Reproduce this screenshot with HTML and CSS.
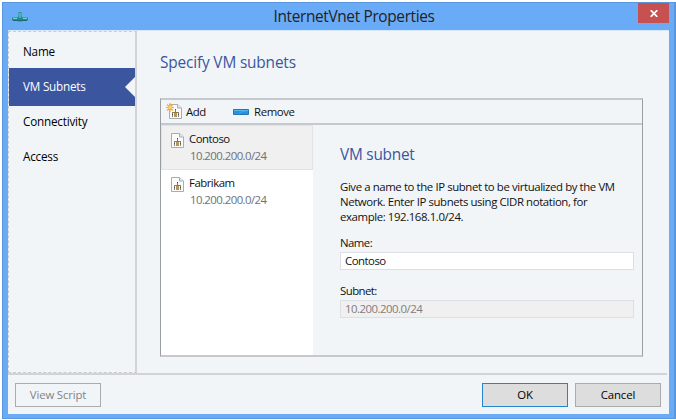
FILE: index.html
```html
<!DOCTYPE html>
<html lang="en">
<head>
<meta charset="utf-8">
<title>InternetVnet Properties</title>
<link rel="stylesheet" href="styles.css">
</head>
<body>
<svg width="0" height="0" class="defs" aria-hidden="true">
  <symbol id="subnet" viewBox="0 0 13 15">
    <path d="M.5.5h8l4 3.500v10.500h-12z" fill="#fbfbfb" stroke="#a9adb1"/>
    <path d="M8.500.5v3.500h4" fill="#e6e8ea" stroke="#a9adb1"/>
    <path d="M6.500 5v3M3 8.500h7M3.500 8v5M9.500 8v5" stroke="#85827c" fill="none"/>
    <path d="M6.500 7v6M5.500 8v5M7.500 8v5" stroke="#9c7425" stroke-opacity=".75" fill="none"/>
    <path d="M3 10.500h1M9 10.500h1M6 5.500h1" stroke="#604b31" fill="none"/>
  </symbol>
</svg>
<main class="window">
  <header class="titlebar">
    <svg class="app-icon" width="16" height="11" viewBox="0 0 16 11">
      <path d="M6.500 0h3v6h-3z" fill="#2b8f92"/>
      <path d="M0 5.500h5.500l1-1h3l1 1H16v3h-5l-1 1H6l-1-1H0z" fill="#268793"/>
      <path d="M1 6.500h4M11 6.500h4M8 1v5" stroke="#67dac5" fill="none"/>
      <path d="M1 8.500h14" stroke="#1d6a75"/>
    </svg>
    <h1>InternetVnet Properties</h1>
    <button class="close" aria-label="Close"><svg width="8" height="7" viewBox="0 0 8 7"><path d="M.7.2l6.600 6.600M7.300.2L.7 6.800" stroke="#fff" stroke-width="1.800"/></svg></button>
  </header>
  <div class="client">
    <div class="body">
      <nav class="sidebar">
        <a>Name</a>
        <a class="active"><span>VM Subnets</span></a>
        <a>Connectivity</a>
        <a>Access</a>
      </nav>
      <section class="content">
        <h2>Specify VM subnets</h2>
        <div class="panel">
          <div class="toolbar">
            <span class="add"><svg width="16" height="16" viewBox="0 0 16 16"><use href="#subnet" x="3" y="1" width="13" height="15"/><path d="M4 0v9M0 4.500h8M1 1.500l6 6M7 1.500l-6 6" stroke="#f2ab3b" stroke-width="1.200"/><circle cx="4" cy="4.500" r="1.600" fill="#ffd36b"/></svg>Add</span>
            <span class="remove"><svg width="16" height="6" viewBox="0 0 16 6"><path d="M.5.5h15v5H.5z" fill="#2a91df" stroke="#2277b5"/><path d="M1 1.500h14" stroke="#55b7ef"/><path d="M6 4.500l3-2 5-.500" stroke="#43a6ec" fill="none"/></svg>Remove</span>
          </div>
          <div class="split">
            <ul class="list">
              <li class="selected"><svg width="13" height="15"><use href="#subnet"/></svg><div><b>Contoso</b><small>10.200.200.0/24</small></div></li>
              <li><svg width="13" height="15"><use href="#subnet"/></svg><div><b>Fabrikam</b><small>10.200.200.0/24</small></div></li>
            </ul>
            <form class="form">
              <h3>VM subnet</h3>
              <p>Give a name to the IP subnet to be virtualized by the VM<br>Network. Enter IP subnets using CIDR notation, for<br>example: 192.168.1.0/24.</p>
              <label for="name">Name:</label>
              <input id="name" value="Contoso">
              <label for="net">Subnet:</label>
              <input id="net" value="10.200.200.0/24" disabled>
            </form>
          </div>
        </div>
      </section>
    </div>
    <footer class="footer">
      <button class="btn script" disabled>View Script</button>
      <button class="btn ok">OK</button>
      <button class="btn">Cancel</button>
    </footer>
  </div>
</main>
</body>
</html>
```
FILE: styles.css
```css
* { box-sizing: border-box; }
html, body { margin: 0; height: 420px; overflow: hidden; }
body {
  background: #fff;
  padding: 2px 0 1px 2px;
  font: 11.400px/15px "Open Sans", "Noto Sans", sans-serif;
  letter-spacing: -0.4px;
  color: #111;
}
.defs { position: absolute; }
h1, h2, h3, p, ul { margin: 0; padding: 0; font-weight: 400; }
button, input { font: inherit; letter-spacing: inherit; }
.window {
  display: flex;
  flex-direction: column;
  width: 674px;
  height: 417px;
  background: #6aabf7;
  border: solid #5a96db;
  border-width: 1px 2px 1px 1px;
}
.titlebar {
  display: flex;
  align-items: flex-start;
  flex: none;
  height: 27px;
  padding: 0 5px 0 9px;
}
.app-icon { margin-top: 9px; }
h1 { flex: 1; font-size: 15.400px; letter-spacing: -0.34px; line-height: 27px; color: #222; text-align: center; padding-left: 42px; }
.close { width: 31px; height: 20px; padding: 0; border: 0; background: #c75050; display: flex; align-items: center; justify-content: center; }
.client {
  flex: none;
  width: 661px;
  height: 384px;
  margin-left: 5px;
  background: #f1f5f8;
  border-top: 1px solid #d6e8fb;
  display: flex;
  flex-direction: column;
}
.body { display: flex; height: 344px; border-bottom: 2px solid #d1d3d7; margin-right: 2px; }
.sidebar {
  width: 129px;
  padding-top: 4px;
  border: 1px dashed #c9ccd0;
  border-right: 2px solid #d1d3d7;
  font-size: 11.700px;
  letter-spacing: -0.2px;
}
.sidebar a { display: flex; align-items: center; height: 32px; padding: 0 0 2px 14px; margin-bottom: 3px; color: #000; }
.sidebar a:first-child { margin-bottom: 0; }
.sidebar a.active { height: 38px; padding-bottom: 0; margin-bottom: 0; background: #3b559f; color: #fff; position: relative; }
.sidebar a.active span { padding-bottom: 1px; }
.sidebar a.active::after {
  content: "";
  position: absolute;
  right: 0;
  top: 9px;
  border: solid transparent;
  border-width: 10px 10px 10px 0;
  border-right-color: #f1f5f8;
}
.content { padding: 21px 0 0 23px; }
h2, h3 { font-size: 15.400px; letter-spacing: -0.16px; line-height: 22px; color: #3b559f; }
h3 { letter-spacing: -0.24px; }
.panel {
  width: 483px;
  height: 259px;
  margin-top: 24px;
  border: solid #c5c8cc;
  border-width: 2px 1px;
  border-left-color: #999ea3;
  border-right-color: #999ea3;
}
.toolbar { display: flex; height: 25px; padding-left: 5px; border-bottom: 2px solid #c5c8cc; }
.toolbar span { display: flex; align-items: center; gap: 4px; padding-bottom: 1px; }
.toolbar .add { width: 67px; }
.toolbar .remove { gap: 5px; }
.remove svg { margin-top: 1px; }
.split { display: flex; height: 230px; }
.list { width: 152px; background: #fff; list-style: none; }
.list li { display: flex; gap: 5px; height: 44px; padding: 6px 0 0 9px; border: 1px solid transparent; }
.list .selected { height: 45px; padding-top: 7px; background: #f0f0f0; border-color: #e2e3e5; }
.list b, .list small { display: block; font-weight: 400; font-size: inherit; line-height: 17px; letter-spacing: -0.5px; }
.list div { margin-top: -3px; }
.list small { color: #6d7176; padding-left: 1px; letter-spacing: -0.55px; }
.form { width: 321px; padding: 19px 0 0 27px; }
.form p { margin-top: 13px; white-space: nowrap; }
.form label { display: block; margin-top: 11px; height: 16px; letter-spacing: -0.55px; }
.form input { display: block; width: 294px; height: 18px; margin-top: 1px; padding: 0 4px 1px; border: 1px solid #dcdfe5; background: #fff; color: #111; letter-spacing: -0.5px; }
.form input + label { margin-top: 13px; }
.form input:disabled { background: #f0f0f0; color: #7d7d7d; }
.footer { display: flex; padding: 8px 8px 0 7px; }
.btn { width: 86px; height: 24px; padding: 0 0 1px; border: 1px solid #a9abad; background: #ddd; color: #000; margin-left: 7px; letter-spacing: -0.15px; }
.btn.script { margin: 0 auto 0 0; background: #f1f5f8; color: #838383; }
.btn.ok { border-color: #2585cc; }
```
